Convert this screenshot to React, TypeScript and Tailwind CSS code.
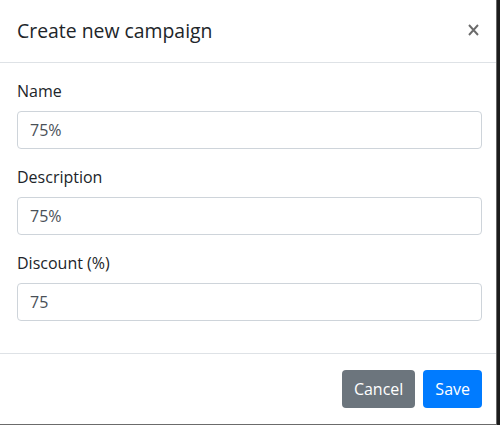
import { useState } from "react";

const font = { fontFamily: '"Segoe UI", "Open Sans", "Noto Sans", sans-serif' };

function Field({ label, value, onChange }: { label: string; value: string; onChange: (v: string) => void }) {
  return (
    <div className="mb-4">
      <label className="block mb-2 text-base leading-6 text-[#212529]">{label}</label>
      <input
        type="text"
        value={value}
        onChange={(e) => onChange(e.target.value)}
        className="block w-full h-[38px] px-3 py-1.5 text-base leading-6 text-[#495057] bg-white border border-[#ced4da] rounded outline-none"
      />
    </div>
  );
}

export default function App() {
  const [form, setForm] = useState({ name: "75%", description: "75%", discount: "75" });

  return (
    <div className="w-[500px] h-[425px] bg-[#1c1c1c] overflow-hidden" style={font}>
      <div className="w-[497px] h-[425px] bg-white border-r border-b border-[#6b6b6b] flex flex-col">
        {/* Header */}
        <div className="flex items-start justify-between h-[63px] pl-4 pr-[14px] py-4 border-b border-[#dee2e6]">
          <h5 className="text-[19.4px] leading-[30px] font-medium text-[#212529] pl-px">Create new campaign</h5>
          <button className="mt-2 mr-[3px] text-[#6b6b6b]" aria-label="Close">
            <svg width="11" height="12" viewBox="0 0 11 12" fill="none" stroke="currentColor" strokeWidth="1.9">
              <path d="M1 1L10 11M10 1L1 11" />
            </svg>
          </button>
        </div>

        {/* Body */}
        <div className="pl-[17px] pr-[14px] pt-4 pb-4 border-b border-[#dee2e6]">
          <Field label="Name" value={form.name} onChange={(v) => setForm({ ...form, name: v })} />
          <Field label="Description" value={form.description} onChange={(v) => setForm({ ...form, description: v })} />
          <Field label="Discount (%)" value={form.discount} onChange={(v) => setForm({ ...form, discount: v })} />
        </div>

        {/* Footer */}
        <div className="flex items-center justify-end gap-2 pr-[14px] pt-4">
          <button className="h-[38px] px-3 text-base text-white bg-[#6c757d] rounded">Cancel</button>
          <button className="h-[38px] px-3 text-base text-white bg-[#007bff] rounded">Save</button>
        </div>
      </div>
    </div>
  );
}
